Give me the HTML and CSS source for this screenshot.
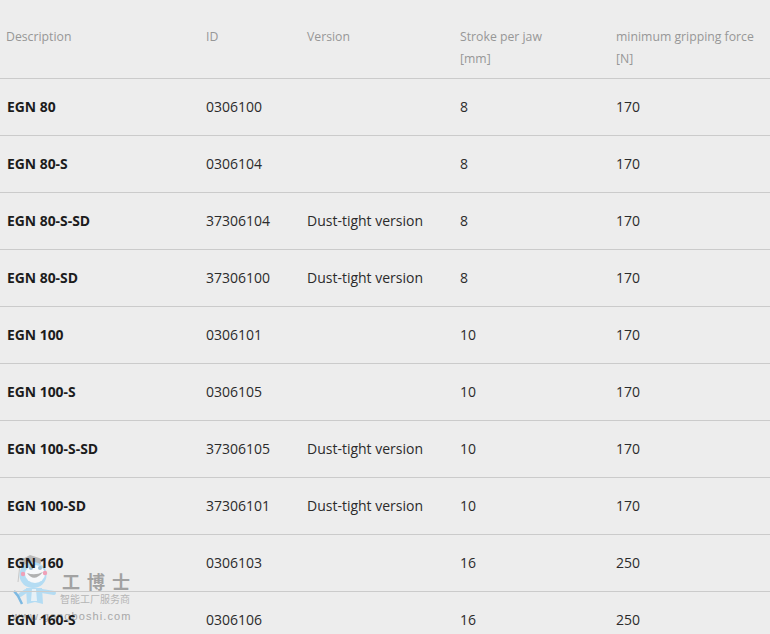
FILE: index.html
```html
<!DOCTYPE html>
<html lang="en">
<head>
<meta charset="utf-8">
<title>EGN variants</title>
<link rel="stylesheet" href="styles.css">
</head>
<body>
<div class="mark">
<svg class="mascot" width="50" height="56" viewBox="0 0 50 56">
<path d="M7 7 L18 1 L30 5 L28 11 Q18 7 10 12 Z" fill="#8f8f8f" opacity=".55"/>
<path d="M8 10 L6 28" stroke="#c9c9c9" stroke-width="1" fill="none"/>
<ellipse cx="21" cy="21" rx="13.5" ry="13" fill="#b4dcf3"/>
<ellipse cx="23" cy="20" rx="10" ry="9" fill="#f6f8fa"/>
<circle cx="19" cy="14" r="2" fill="#9fc0d6"/>
<circle cx="28" cy="14" r="2" fill="#9fc0d6"/>
<path d="M15 19 Q22 29 31 18 Q23 22 15 19 Z" fill="#8a8a8a" opacity=".65"/>
<circle cx="11" cy="20" r="2.2" fill="#f0a0b8"/>
<circle cx="33" cy="19" r="2.2" fill="#f0a0b8"/>
<path d="M14 34 L30 34 L31 50 L23 48 L15 50 Z" fill="#b4dcf3"/>
<path d="M20 35 L24 35 L25 47 L19 47 Z" fill="#e7f1f7"/>
<path d="M14 37 L8 41 M30 37 L42 39" stroke="#b4dcf3" stroke-width="4" stroke-linecap="round" fill="none"/>
<path d="M2 37 L6 42 L10 50" stroke="#7db9e2" stroke-width="2.5" fill="none"/>
</svg>
<div class="brand">
<div class="cn">工博士</div>
<div class="sub">智能工厂服务商</div>
</div>
<div class="url">www.gongboshi.com</div>
</div>
<table class="spec">
<colgroup><col class="c1"><col class="c2"><col class="c3"><col class="c4"><col class="c5"></colgroup>
<thead>
<tr><th>Description</th><th>ID</th><th>Version</th><th>Stroke per jaw<br>[mm]</th><th>minimum gripping force<br>[N]</th></tr>
</thead>
<tbody>
<tr><td class="name">EGN 80</td><td>0306100</td><td></td><td>8</td><td>170</td></tr>
<tr><td class="name">EGN 80-S</td><td>0306104</td><td></td><td>8</td><td>170</td></tr>
<tr><td class="name">EGN 80-S-SD</td><td>37306104</td><td>Dust-tight version</td><td>8</td><td>170</td></tr>
<tr><td class="name">EGN 80-SD</td><td>37306100</td><td>Dust-tight version</td><td>8</td><td>170</td></tr>
<tr><td class="name">EGN 100</td><td>0306101</td><td></td><td>10</td><td>170</td></tr>
<tr><td class="name">EGN 100-S</td><td>0306105</td><td></td><td>10</td><td>170</td></tr>
<tr><td class="name">EGN 100-S-SD</td><td>37306105</td><td>Dust-tight version</td><td>10</td><td>170</td></tr>
<tr><td class="name">EGN 100-SD</td><td>37306101</td><td>Dust-tight version</td><td>10</td><td>170</td></tr>
<tr><td class="name">EGN 160</td><td>0306103</td><td></td><td>16</td><td>250</td></tr>
<tr><td class="name">EGN 160-S</td><td>0306106</td><td></td><td>16</td><td>250</td></tr>
</tbody>
</table>
</body>
</html>
```
FILE: styles.css
```css
html, body {
  margin: 0;
  padding: 0;
  height: 634px;
  overflow: hidden;
  background: #ededed;
}
.spec {
  position: relative;
  width: 770px;
  border-collapse: collapse;
  table-layout: fixed;
  font-family: "Open Sans", sans-serif;
  font-size: 14px;
  color: #2b2b2b;
}
.c1 { width: 206px; }
.c2 { width: 101px; }
.c3 { width: 153px; }
.c4 { width: 156px; }
.c5 { width: 154px; }
th {
  font-weight: 400;
  font-size: 12.25px;
  line-height: 22px;
  color: #979797;
  text-align: left;
  vertical-align: top;
  padding: 26px 0 8px;
  height: 44px;
}
td {
  height: 54px;
  padding: 0 0 2px;
  border-top: 1px solid #cbcbcb;
  vertical-align: middle;
}
th:first-child { padding-left: 6px; }
.name {
  font-weight: 700;
  font-size: 13.9px;
  padding-left: 7px;
  color: #1c1c1c;
}
.mark {
  position: absolute;
  left: 12px;
  top: 552px;
  width: 120px;
  height: 72px;
}
.mascot { position: absolute; left: 0; top: 2px; }
.brand {
  position: absolute;
  left: 48px;
  top: 18px;
  width: 72px;
  color: #a2a2a2;
  font-family: "Noto Sans CJK SC", sans-serif;
}
.cn {
  font-size: 18px;
  font-weight: 700;
  line-height: 22px;
  letter-spacing: 7px;
  padding-left: 2px;
  white-space: nowrap;
}
.sub { font-size: 10px; line-height: 13px; color: #b5b5b5; white-space: nowrap; }
.url {
  position: absolute;
  left: 0;
  top: 58px;
  font-family: "Liberation Sans", sans-serif;
  font-size: 11px;
  letter-spacing: 1.1px;
  color: #a8a8a8;
  white-space: nowrap;
}
```
